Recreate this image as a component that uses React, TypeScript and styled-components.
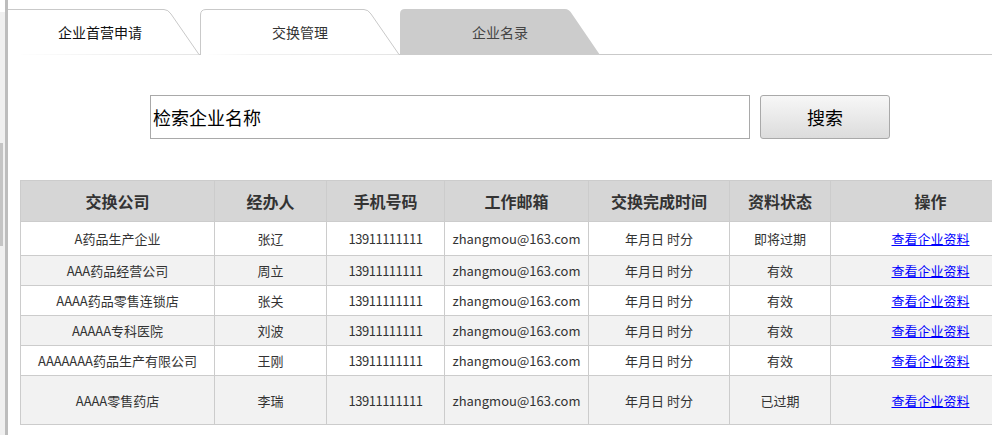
import styled, { createGlobalStyle } from "styled-components"

const GlobalStyle = createGlobalStyle`
  html, body {
    margin: 0;
    padding: 0;
    background: #fff;
  }
  body {
    font-family: "Microsoft YaHei", "Noto Sans CJK SC", "Noto Sans", sans-serif;
    color: #333;
  }
`

type Row = {
  company: string
  agent: string
  phone: string
  email: string
  time: string
  status: string
  height: number
}

const rows: Row[] = [
  { company: "A药品生产企业", agent: "张辽", phone: "13911111111", email: "zhangmou@163.com", time: "年月日 时分", status: "即将过期", height: 34 },
  { company: "AAA药品经营公司", agent: "周立", phone: "13911111111", email: "zhangmou@163.com", time: "年月日 时分", status: "有效", height: 30 },
  { company: "AAAA药品零售连锁店", agent: "张关", phone: "13911111111", email: "zhangmou@163.com", time: "年月日 时分", status: "有效", height: 30 },
  { company: "AAAAA专科医院", agent: "刘波", phone: "13911111111", email: "zhangmou@163.com", time: "年月日 时分", status: "有效", height: 30 },
  { company: "AAAAAAA药品生产有限公司", agent: "王刚", phone: "13911111111", email: "zhangmou@163.com", time: "年月日 时分", status: "有效", height: 30 },
  { company: "AAAA零售药店", agent: "李瑞", phone: "13911111111", email: "zhangmou@163.com", time: "年月日 时分", status: "已过期", height: 49 },
]

const columns = [
  { title: "交换公司", width: 194 },
  { title: "经办人", width: 112 },
  { title: "手机号码", width: 118 },
  { title: "工作邮箱", width: 144 },
  { title: "交换完成时间", width: 141 },
  { title: "资料状态", width: 101 },
  { title: "操作", width: 200 },
]

const tabs = [
  { label: "企业首营申请", active: false, color: "#111" },
  { label: "交换管理", active: false, color: "#333" },
  { label: "企业名录", active: true, color: "#444" },
]

const TabShape = ({ active }: { active: boolean }) =>
  active ? (
    <svg width="200" height="46" viewBox="0 0 200 46">
      <path d="M0 46 V5 Q0 0 5 0 H165 Q169 0 172 5 L200 46 Z" fill="#cccccc" />
    </svg>
  ) : (
    <svg width="200" height="46" viewBox="0 0 200 46">
      <path
        d="M0.5 46 V6 Q0.5 0.5 6 0.5 H164 Q168 0.5 171 5 L199 45.5"
        fill="#fff"
        stroke="#c9c9c9"
        strokeWidth="1"
      />
    </svg>
  )

export default function App() {
  return (
    <>
      <GlobalStyle />
      <Page>
        <Side>
          <Track>
            <TrackFill>
              <Thumb />
            </TrackFill>
          </Track>
          <Rail />
        </Side>
        <Main>
          <TabBar>
            {tabs.map((t, i) => (
              <Tab key={t.label} $first={i === 0}>
                <TabBg>
                  <TabShape active={t.active} />
                </TabBg>
                <TabLabel $color={t.color}>{t.label}</TabLabel>
              </Tab>
            ))}
          </TabBar>

          <SearchRow>
            <SearchInput defaultValue="检索企业名称" />
            <SearchButton>搜索</SearchButton>
          </SearchRow>

          <Table>
            <colgroup>
              {columns.map((c) => (
                <col key={c.title} style={{ width: c.width }} />
              ))}
            </colgroup>
            <thead>
              <tr>
                {columns.map((c) => (
                  <Th key={c.title}>{c.title}</Th>
                ))}
              </tr>
            </thead>
            <tbody>
              {rows.map((r, i) => (
                <Tr key={r.company} $alt={i % 2 === 1} style={{ height: r.height }}>
                  <Td>{r.company}</Td>
                  <Td>{r.agent}</Td>
                  <Td $tight>{r.phone}</Td>
                  <Td>{r.email}</Td>
                  <Td>{r.time}</Td>
                  <Td>{r.status}</Td>
                  <Td>
                    <Link href="#">查看企业资料</Link>
                  </Td>
                </Tr>
              ))}
            </tbody>
          </Table>
        </Main>
      </Page>
    </>
  )
}

const Page = styled.div`
  display: flex;
  width: 992px;
  height: 435px;
  overflow: hidden;
`

const Side = styled.div`
  display: flex;
  width: 8px;
  flex-shrink: 0;
`

const Track = styled.div`
  display: flex;
  flex-direction: column;
  width: 5px;
  padding-top: 12px;
`

const TrackFill = styled.div`
  flex: 1;
  background: #f0f0f0;
  padding-top: 131px;
`

const Thumb = styled.div`
  width: 3px;
  height: 103px;
  background: #c4c4c4;
`

const Rail = styled.div`
  width: 3px;
  background: #bdbdbd;
`

const Main = styled.div`
  flex: 1;
  min-width: 0;
  overflow: hidden;
`

const TabBar = styled.div`
  display: flex;
  height: 45px;
  padding-top: 9px;
  border-bottom: 1px solid #c9c9c9;
`

const Tab = styled.div<{ $first?: boolean }>`
  position: relative;
  width: 200px;
  height: 46px;
  flex-shrink: 0;
  margin-left: ${(p) => (p.$first ? "-8px" : "0")};
`

const TabBg = styled.div`
  position: absolute;
  inset: 0;
  line-height: 0;
`

const TabLabel = styled.div<{ $color: string }>`
  position: relative;
  height: 46px;
  line-height: 46px;
  text-align: center;
  font-size: 14px;
  color: ${(p) => p.$color};
`

const SearchRow = styled.div`
  display: flex;
  gap: 10px;
  padding-left: 142px;
  margin-top: 40px;
`

const SearchInput = styled.input`
  box-sizing: border-box;
  width: 600px;
  height: 44px;
  border: 1px solid #a9a9a9;
  padding: 0 2px;
  font-family: inherit;
  font-size: 18px;
  color: #000;
  outline: none;
`

const SearchButton = styled.button`
  box-sizing: border-box;
  width: 130px;
  height: 44px;
  border: 1px solid #a9a9a9;
  border-radius: 3px;
  background: linear-gradient(#f7f7f7, #dcdcdc);
  font-family: inherit;
  font-size: 18px;
  color: #000;
`

const Table = styled.table`
  margin: 41px 0 0 12px;
  width: 1010px;
  table-layout: fixed;
  border-collapse: collapse;
  border: 1px solid #cccccc;
  font-size: 13px;
  color: #333;
`

const Th = styled.th`
  height: 40px;
  padding: 0;
  background: #d6d6d6;
  border: 1px solid #cccccc;
  font-size: 16px;
  font-weight: 700;
  color: #333;
  text-align: center;
`

const Tr = styled.tr<{ $alt: boolean }>`
  background: ${(p) => (p.$alt ? "#f2f2f2" : "#fff")};
`

const Td = styled.td<{ $tight?: boolean }>`
  padding: 0;
  border: 1px solid #cccccc;
  text-align: center;
  white-space: nowrap;
  letter-spacing: ${(p) => (p.$tight ? "-0.5px" : "0")};
`

const Link = styled.a`
  color: #0000ff;
  text-decoration: underline;
`
